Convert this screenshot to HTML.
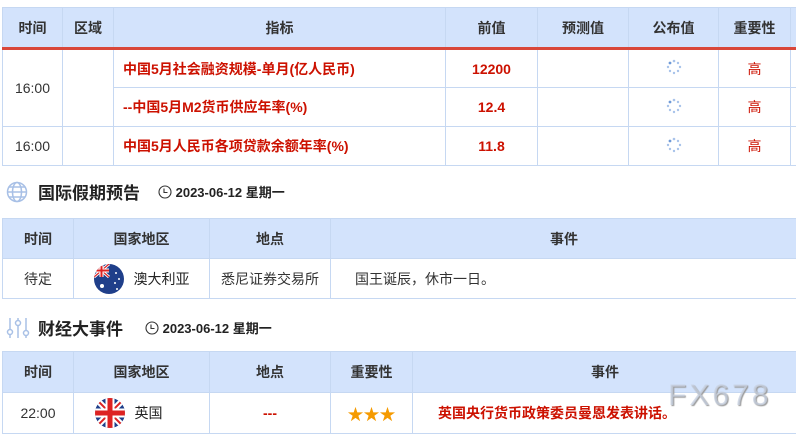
<!DOCTYPE html>
<html><head><meta charset="utf-8"><style>
*{margin:0;padding:0;box-sizing:border-box}
body{width:796px;height:433px;overflow:hidden;background:#fff;font-family:"Liberation Sans","Noto Sans CJK SC",sans-serif;font-size:14px;color:#333;position:relative}
table{border-collapse:collapse;position:absolute;table-layout:fixed}
td,th{border:1px solid #c6d8f2;text-align:center;padding:0}
th{background:#d3e3fc;font-weight:bold;color:#333;font-size:14px}
.red{color:#cc1100;font-weight:bold}
.ind{text-align:left;padding-left:9px}
.title{position:absolute;font-size:17px;font-weight:bold;color:#222;display:flex;align-items:center}
.date{font-size:13px;font-weight:bold;margin-left:18px;display:flex;align-items:center;color:#222}
.spin{display:inline-block;width:16px;height:16px}
</style></head><body>
<table style="left:2px;top:7px;width:796px">
<colgroup><col style="width:60px"><col style="width:51px"><col style="width:332px"><col style="width:92px"><col style="width:91px"><col style="width:90px"><col style="width:72px"><col style="width:8px"></colgroup>
<tr style="height:41px;border-bottom:3px solid #d9473a"><th>时间</th><th>区域</th><th>指标</th><th>前值</th><th>预测值</th><th>公布值</th><th>重要性</th><th></th></tr>
<tr style="height:39px"><td rowspan="2">16:00</td><td rowspan="2"></td><td class="ind red">中国5月社会融资规模-单月(亿人民币)</td><td class="red">12200</td><td></td><td><svg class="spin" viewBox="0 0 16 16"><g fill="#a9c3ea"><circle cx="8" cy="2" r="1.3"/><circle cx="12" cy="4" r="1.2"/><circle cx="14" cy="8" r="1.2"/><circle cx="12" cy="12" r="1.2"/><circle cx="8" cy="14" r="1.2"/><circle cx="4" cy="12" r="1.2"/><circle cx="2" cy="8" r="1.2"/><circle cx="4" cy="4" r="1.4" fill="#6f9ad8"/></g></svg></td><td class="red" style="font-weight:normal">高</td><td></td></tr>
<tr style="height:39px"><td class="ind red">--中国5月M2货币供应年率(%)</td><td class="red">12.4</td><td></td><td><svg class="spin" viewBox="0 0 16 16"><g fill="#a9c3ea"><circle cx="8" cy="2" r="1.3"/><circle cx="12" cy="4" r="1.2"/><circle cx="14" cy="8" r="1.2"/><circle cx="12" cy="12" r="1.2"/><circle cx="8" cy="14" r="1.2"/><circle cx="4" cy="12" r="1.2"/><circle cx="2" cy="8" r="1.2"/><circle cx="4" cy="4" r="1.4" fill="#6f9ad8"/></g></svg></td><td class="red" style="font-weight:normal">高</td><td></td></tr>
<tr style="height:39px"><td>16:00</td><td></td><td class="ind red">中国5月人民币各项贷款余额年率(%)</td><td class="red">11.8</td><td></td><td><svg class="spin" viewBox="0 0 16 16"><g fill="#a9c3ea"><circle cx="8" cy="2" r="1.3"/><circle cx="12" cy="4" r="1.2"/><circle cx="14" cy="8" r="1.2"/><circle cx="12" cy="12" r="1.2"/><circle cx="8" cy="14" r="1.2"/><circle cx="4" cy="12" r="1.2"/><circle cx="2" cy="8" r="1.2"/><circle cx="4" cy="4" r="1.4" fill="#6f9ad8"/></g></svg></td><td class="red" style="font-weight:normal">高</td><td></td></tr>
</table>

<div class="title" style="left:6px;top:179px">
<svg width="22" height="22" viewBox="0 0 22 22" fill="none" stroke="#a8c0e6" stroke-width="1.5"><circle cx="11" cy="11" r="9.5"/><ellipse cx="11" cy="11" rx="4.5" ry="9.5"/><line x1="1.5" y1="11" x2="20.5" y2="11"/><line x1="3" y1="6" x2="19" y2="6"/><line x1="3" y1="16" x2="19" y2="16"/></svg>
<span style="margin-left:10px">国际假期预告</span>
<span class="date"><svg width="14" height="14" viewBox="0 0 14 14" fill="none" stroke="#333" stroke-width="1.1"><circle cx="7" cy="7" r="6"/><path d="M6 3.5V7.5H9.5"/></svg>&nbsp;2023-06-12 星期一</span></div>

<table style="left:2px;top:218px;width:796px">
<colgroup><col style="width:71px"><col style="width:136px"><col style="width:121px"><col></colgroup>
<tr style="height:40px"><th>时间</th><th>国家地区</th><th>地点</th><th>事件</th></tr>
<tr style="height:40px"><td>待定</td><td><div style="display:flex;align-items:center;justify-content:center;gap:10px"><svg width="30" height="30" viewBox="0 0 30 30"><clipPath id="c1"><circle cx="15" cy="15" r="15"/></clipPath><g clip-path="url(#c1)"><rect width="30" height="30" fill="#1f3f8a"/><path d="M0 0L15 13M15 0L0 13" stroke="#fff" stroke-width="3"/><path d="M0 0L15 13M15 0L0 13" stroke="#d22" stroke-width="1.2"/><path d="M7.5 0V13M0 6.5H15" stroke="#fff" stroke-width="4"/><path d="M7.5 0V13M0 6.5H15" stroke="#d22" stroke-width="2"/><g fill="#fff"><circle cx="8" cy="22" r="2"/><circle cx="22" cy="9" r="1"/><circle cx="25" cy="15" r="1"/><circle cx="21" cy="19" r="1"/><circle cx="23" cy="25" r="1"/></g></g></svg><span style="color:#222">澳大利亚</span></div></td><td>悉尼证券交易所</td><td style="text-align:left;padding-left:24px">国王诞辰，休市一日。</td></tr>
</table>

<div class="title" style="left:6px;top:315px">
<svg width="24" height="22" viewBox="0 0 24 22" fill="none" stroke="#a8c0e6" stroke-width="1.5"><path d="M4 1V21M12 1V21M20 1V21"/><circle cx="4" cy="15" r="2.5" fill="#fff"/><circle cx="12" cy="6" r="2.5" fill="#fff"/><circle cx="20" cy="16" r="2.5" fill="#fff"/></svg>
<span style="margin-left:8px">财经大事件</span>
<span class="date" style="margin-left:22px"><svg width="14" height="14" viewBox="0 0 14 14" fill="none" stroke="#333" stroke-width="1.1"><circle cx="7" cy="7" r="6"/><path d="M6 3.5V7.5H9.5"/></svg>&nbsp;2023-06-12 星期一</span></div>

<table style="left:2px;top:351px;width:796px">
<colgroup><col style="width:71px"><col style="width:136px"><col style="width:121px"><col style="width:82px"><col></colgroup>
<tr style="height:41px"><th>时间</th><th>国家地区</th><th>地点</th><th>重要性</th><th>事件</th></tr>
<tr style="height:41px"><td>22:00</td><td><div style="display:flex;align-items:center;justify-content:center;gap:10px;margin-left:-26px"><svg width="30" height="30" viewBox="0 0 30 30"><clipPath id="c2"><circle cx="15" cy="15" r="15"/></clipPath><g clip-path="url(#c2)"><rect width="30" height="30" fill="#1f3f8a"/><path d="M0 0L30 30M30 0L0 30" stroke="#fff" stroke-width="6"/><path d="M0 0L30 30M30 0L0 30" stroke="#d22" stroke-width="2"/><path d="M15 0V30M0 15H30" stroke="#fff" stroke-width="9"/><path d="M15 0V30M0 15H30" stroke="#d22" stroke-width="5"/></g></svg><span style="color:#222">英国</span></div></td><td class="red">---</td><td style="color:#f59a00;font-size:16px;letter-spacing:0">★★★</td><td class="red" style="text-align:left;padding-left:25px;font-weight:bold">英国央行货币政策委员曼恩发表讲话。</td></tr>
</table>
<div style="position:absolute;left:668px;top:379px;font-size:30px;color:rgba(200,210,225,0.75);letter-spacing:3px;font-family:'Liberation Sans',sans-serif;text-shadow:1px 1px 1px #999">FX678</div>
</body></html>
